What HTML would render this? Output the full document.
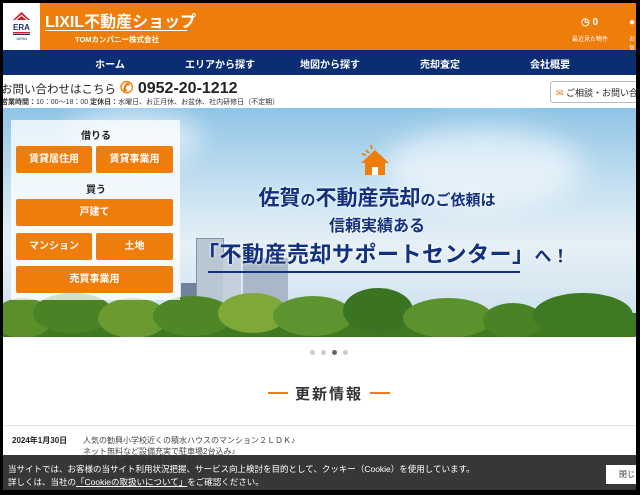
<!DOCTYPE html>
<html><head><meta charset="utf-8"><style>
*{margin:0;padding:0;box-sizing:border-box}
body{width:640px;height:495px;background:#000;overflow:hidden;font-family:"Liberation Sans","Noto Sans CJK JP",sans-serif;position:relative}
#pg{position:absolute;left:3px;top:3px;width:633px;height:487px;background:#fff;overflow:hidden}
.a{position:absolute}
.hdr{left:0;top:0;width:633px;height:47px;background:#ef7d0c}
.logo{left:0;top:0;width:37px;height:47px;background:#fff}
.nav{left:0;top:47px;width:633px;height:25px;background:#0b2d72;color:#fff;font-size:10px;font-weight:bold}
.nav span{position:absolute;top:6px;transform:translateX(-50%);white-space:nowrap}
.hero{left:0;top:105px;width:633px;height:229px;background:linear-gradient(180deg,#8fc4e6 0%,#c7e1f1 35%,#e6f0f6 60%,#d7e7f1 80%,#c9dde9 100%);overflow:hidden}
.btn{position:absolute;background:#ef7d0c;color:#fff;font-size:10px;font-weight:bold;text-align:center;border-radius:2px}
.t{position:absolute;border-radius:50%}
</style></head><body><div id="pg">
<div class="a hdr"></div>
<div class="a logo">
<svg width="37" height="47" viewBox="0 0 37 47"><path d="M10 17 L18.5 9 L27 17 Z" fill="#c8202f"/><path d="M12 17 L18.5 11.5 L25 17Z" fill="#fff"/><path d="M13.5 17 L18.5 13 L23.5 17Z" fill="#c8202f"/>
<text x="18.5" y="27" font-size="8" font-weight="bold" fill="#1c2f7a" text-anchor="middle" font-family="Liberation Sans">ERA</text>
<rect x="10" y="29" width="17" height="1.5" fill="#c8202f"/><rect x="10" y="31" width="17" height="1" fill="#1c2f7a"/>
<text x="18.5" y="37" font-size="3.5" fill="#1c2f7a" text-anchor="middle" font-family="Liberation Sans">JAPAN</text></svg></div>
<div class="a" style="left:42px;top:5px;color:#fff;font-size:16px;font-weight:bold;white-space:nowrap">LIXIL不動産ショップ</div>
<div class="a" style="left:42px;top:27px;width:142px;height:1px;background:#fff"></div>
<div class="a" style="left:72px;top:31px;color:#fff;font-size:7.5px;font-weight:bold">TOMカンパニー株式会社</div>
<div class="a" style="left:578px;top:14px;color:#fff;font-size:10px;font-weight:bold">◷ 0</div>
<div class="a" style="left:569px;top:31px;color:#fff;font-size:6px">最近見た物件</div>
<div class="a" style="left:626px;top:14px;color:#fff;font-size:10px">●</div>
<div class="a" style="left:626px;top:31px;color:#fff;font-size:6px">お気</div>
<div class="a nav"><span style="left:107px">ホーム</span><span style="left:217px">エリアから探す</span><span style="left:327px">地図から探す</span><span style="left:437px">売却査定</span><span style="left:547px">会社概要</span></div>
<div class="a" style="left:-2px;top:78px;font-size:11.5px;color:#222;white-space:nowrap">お問い合わせはこちら</div>
<div class="a" style="left:117px;top:75px;font-size:16px;font-weight:bold;color:#222;white-space:nowrap"><span style="color:#ef7d0c">✆</span> 0952-20-1212</div>
<div class="a" style="left:-2px;top:94px;font-size:7px;color:#333;white-space:nowrap"><b>営業時間：</b>10：00〜18：00 <b>定休日：</b>水曜日、お正月休、お盆休、社内研修日（不定期）</div>
<div class="a" style="left:547px;top:78px;width:95px;height:22px;border:1px solid #bbb;border-radius:3px;font-size:9px;color:#222;padding:4px 0 0 5px;white-space:nowrap"><span style="color:#ef7d0c">✉</span> ご相談・お問い合</div>
<div class="a hero">
<div class="a" style="left:60px;top:0;width:140px;height:60px;background:rgba(255,255,255,.5);border-radius:50%;filter:blur(12px)"></div>
<div class="a" style="left:380px;top:20px;width:200px;height:80px;background:rgba(255,255,255,.6);border-radius:50%;filter:blur(14px)"></div>
<div class="a" style="left:193px;top:130px;width:28px;height:70px;background:#b9c6d3;border:1px solid #8294aa"></div>
<div class="a" style="left:220px;top:145px;width:18px;height:55px;background:#c4d0dc"></div>
<div class="a" style="left:240px;top:150px;width:45px;height:50px;background:#a9b8c8"></div>
<div class="a" style="left:178px;top:175px;width:15px;height:25px;background:#6f849c"></div>
<div class="a" style="left:0;top:205px;width:633px;height:30px;background:#3f7a22"></div>
<div class="t" style="left:-10px;top:190px;width:60px;height:40px;background:#5a8f2a"></div>
<div class="t" style="left:30px;top:185px;width:80px;height:40px;background:#4a8226"></div>
<div class="t" style="left:95px;top:190px;width:70px;height:40px;background:#6a9a30"></div>
<div class="t" style="left:150px;top:188px;width:80px;height:40px;background:#4f8727"></div>
<div class="t" style="left:215px;top:185px;width:70px;height:40px;background:#7fa838"></div>
<div class="t" style="left:270px;top:188px;width:80px;height:40px;background:#5e9430"></div>
<div class="t" style="left:340px;top:180px;width:70px;height:45px;background:#3a7322"></div>
<div class="t" style="left:400px;top:190px;width:90px;height:40px;background:#5c922d"></div>
<div class="t" style="left:480px;top:195px;width:60px;height:35px;background:#4a8226"></div>
<div class="t" style="left:530px;top:185px;width:100px;height:45px;background:#3e7a22"></div>
<svg class="a" style="left:350px;top:34px" width="42" height="34" viewBox="0 0 42 34"><path d="M22 8 L8 21 H12 V33 H32 V21 H36 Z" fill="#ef7d0c"/><rect x="19" y="25" width="6" height="8" fill="#fff"/><path d="M13 8 l3 3 M18 3 l1 4 M9 12 l4 1" stroke="#ef7d0c" stroke-width="1.8"/></svg>
<div class="a" style="left:174px;top:74px;width:400px;text-align:center;color:#13307f;font-size:21px;font-weight:bold;white-space:nowrap;text-shadow:0 0 3px #fff">佐賀<span style="font-size:15px">の</span>不動産売却<span style="font-size:15px">のご依頼は</span></div>
<div class="a" style="left:174px;top:104px;width:400px;text-align:center;color:#13307f;font-size:16px;font-weight:bold;text-shadow:0 0 3px #fff">信頼実績ある</div>
<div class="a" style="left:194px;top:129px;color:#13307f;font-size:22px;font-weight:bold;white-space:nowrap;letter-spacing:0.5px;text-shadow:0 0 3px #fff">「不動産売却サポートセンター」<span style="font-size:17px">へ！</span></div>
<div class="a" style="left:205px;top:163px;width:312px;height:2px;background:#13307f"></div>
</div>
<div class="a" style="left:8px;top:117px;width:169px;height:180px;background:rgba(255,255,255,.75)"></div>
<div class="a" style="left:78px;top:124px;font-size:10px;font-weight:bold;color:#222">借りる</div>
<div class="btn" style="left:13px;top:143px;width:76px;height:27px;line-height:27px">賃貸居住用</div>
<div class="btn" style="left:93px;top:143px;width:77px;height:27px;line-height:27px">賃貸事業用</div>
<div class="a" style="left:83px;top:178px;font-size:10px;font-weight:bold;color:#222">買う</div>
<div class="btn" style="left:13px;top:196px;width:157px;height:27px;line-height:27px">戸建て</div>
<div class="btn" style="left:13px;top:230px;width:76px;height:27px;line-height:27px">マンション</div>
<div class="btn" style="left:93px;top:230px;width:77px;height:27px;line-height:27px">土地</div>
<div class="btn" style="left:13px;top:263px;width:157px;height:27px;line-height:27px">売買事業用</div>
<div class="a" style="left:307px;top:347px;width:5px;height:5px;border-radius:50%;background:#ccc"></div>
<div class="a" style="left:318px;top:347px;width:5px;height:5px;border-radius:50%;background:#ccc"></div>
<div class="a" style="left:329px;top:347px;width:5px;height:5px;border-radius:50%;background:#666"></div>
<div class="a" style="left:340px;top:347px;width:5px;height:5px;border-radius:50%;background:#ccc"></div>
<div class="a" style="left:265px;top:389px;width:20px;height:2px;background:#ef7d0c"></div>
<div class="a" style="left:292px;top:380px;font-size:15px;font-weight:bold;color:#333;letter-spacing:2px">更新情報</div>
<div class="a" style="left:367px;top:389px;width:20px;height:2px;background:#ef7d0c"></div>
<div class="a" style="left:0;top:422px;width:633px;height:1px;background:#e3e3e3"></div>
<div class="a" style="left:9px;top:432px;font-size:8px;font-weight:bold;color:#222">2024年1月30日</div>
<div class="a" style="left:80px;top:432px;font-size:8px;color:#444;line-height:11px">人気の勧興小学校近くの積水ハウスのマンション２ＬＤＫ♪<br>ネット無料など設備充実で駐車場2台込み♪<br>お早めにお問い合わせください</div>
<div class="a" style="left:0;top:452px;width:633px;height:35px;background:rgba(40,40,40,.93)"></div>
<div class="a" style="left:5px;top:460px;font-size:8.5px;color:#fff;line-height:13px;white-space:nowrap">当サイトでは、お客様の当サイト利用状況把握、サービス向上検討を目的として、クッキー（Cookie）を使用しています。<br>詳しくは、当社の<u>「Cookieの取扱いについて」</u>をご確認ください。</div>
<div class="a" style="left:603px;top:462px;width:40px;height:19px;background:#fff;font-size:8px;color:#333;padding:4px 0 0 13px">閉じる</div>
</div></body></html>
